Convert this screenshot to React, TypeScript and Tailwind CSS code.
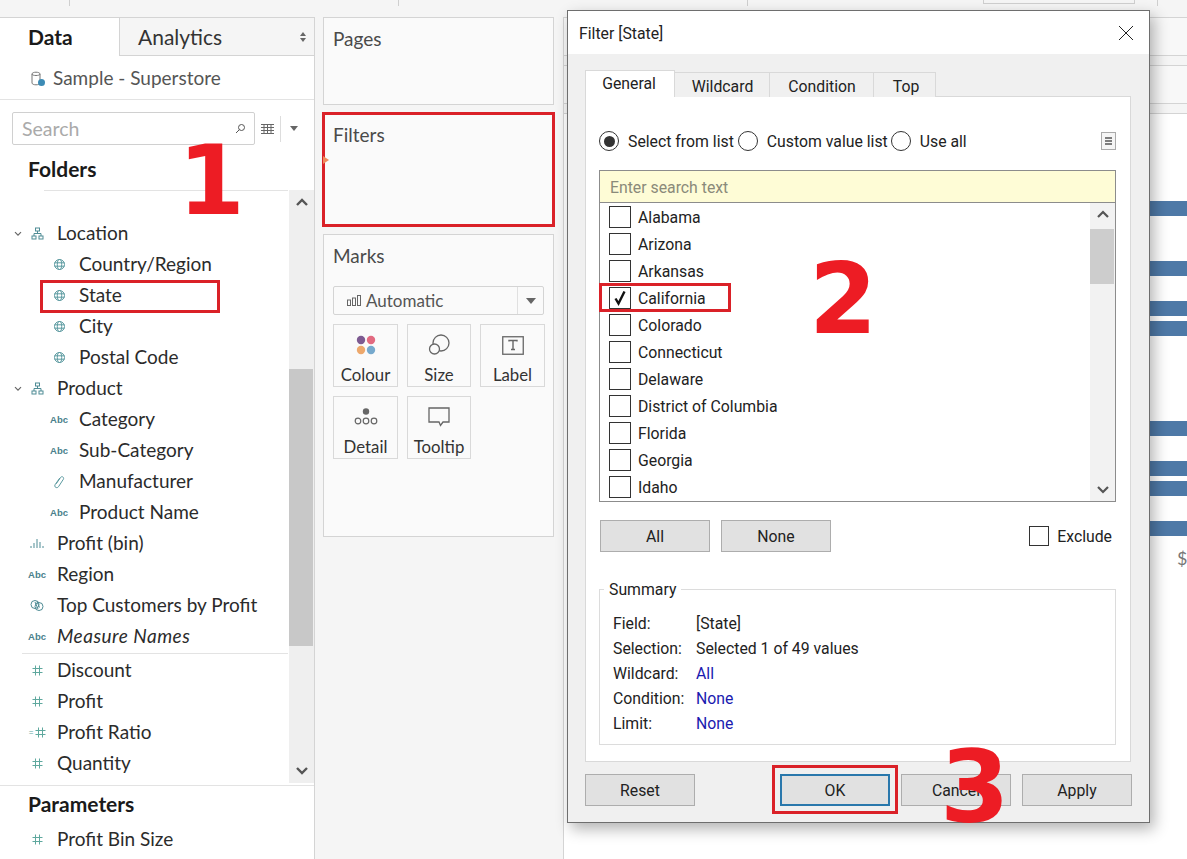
import React from "react";

const sans = "font-['Lato','Liberation_Sans',sans-serif]";
const win = "font-['Roboto','Liberation_Sans',sans-serif]";

function Globe() {
  return (
    <svg width="13" height="13" viewBox="0 0 13 13" fill="none" stroke="#5b9aa0" strokeWidth="1">
      <circle cx="6.5" cy="6.5" r="5" />
      <ellipse cx="6.5" cy="6.5" rx="2.2" ry="5" />
      <path d="M1.5 4.8h10M1.5 8.2h10" />
    </svg>
  );
}

function Hier() {
  return (
    <svg width="13" height="13" viewBox="0 0 13 13" fill="none" stroke="#4f8c95" strokeWidth="1">
      <rect x="4.5" y="1" width="4" height="3" />
      <rect x="1" y="9" width="4" height="3" />
      <rect x="8" y="9" width="4" height="3" />
      <path d="M6.5 4v2.5M3 9V6.5h7V9" />
    </svg>
  );
}

function Chevron() {
  return (
    <svg width="8" height="6" viewBox="0 0 8 6" fill="none" stroke="#666" strokeWidth="1.2">
      <path d="M1 1.2l3 3 3-3" />
    </svg>
  );
}

function Abc() {
  return <span className="text-[9.5px] leading-none font-bold text-[#4a7f8c] font-['Liberation_Sans',sans-serif]">Abc</span>;
}

function Hash() {
  return (
    <svg width="11" height="11" viewBox="0 0 11 11" fill="none" stroke="#5fa89e" strokeWidth="1">
      <path d="M3.5 .5v10M7.5 .5v10M.5 3.5h10M.5 7.5h10" />
    </svg>
  );
}

function Clip() {
  return (
    <svg width="12" height="14" viewBox="0 0 12 14" fill="none" stroke="#5b9aa0" strokeWidth="1">
      <path d="M3.2 8.8L7.6 2.4c1.2-1.6 3.8-.2 2.8 1.8L5.6 11.6c-1.5 2.2-4.8.6-3.6-1.8L6.8 3" />
    </svg>
  );
}

function Bins() {
  return (
    <svg width="14" height="9" viewBox="0 0 14 9" stroke="#4f8c95" strokeWidth="1">
      <path d="M1 9V7M4 9V4M7 9V0M10 9V3M13 9V7" />
    </svg>
  );
}

function Sets() {
  return (
    <svg width="14" height="13" viewBox="0 0 14 13" fill="none" stroke="#4f8c95" strokeWidth="1">
      <circle cx="5" cy="5.5" r="4" />
      <circle cx="9" cy="7.5" r="4" />
      <path d="M5 3l3 7M7 2.5l2.5 6" />
    </svg>
  );
}

function Row({ icon, label, depth, arrow, italic }: { icon: React.ReactNode; label: string; depth: number; arrow?: boolean; italic?: boolean }) {
  return (
    <div className={`flex items-center h-[31px] ${depth ? "pl-[50px]" : "pl-[14px]"}`}>
      {!depth && <span className="w-[8px] flex items-center justify-center">{arrow && <Chevron />}</span>}
      <span className={`flex justify-center items-center ${depth ? "w-[18px] mr-[11px]" : "w-[20px] ml-[5px] mr-[10px]"}`}>{icon}</span>
      <span className={`text-[19px] text-[#2b2b2b] whitespace-nowrap ${italic ? "italic tracking-[0.5px]" : ""}`}>{label}</span>
    </div>
  );
}

function Shelf({ children, h }: { children: React.ReactNode; h: string }) {
  return <div className={`border border-[#d4d4d4] bg-[#fafafa] ${h} px-[9px] pt-[9px] text-[19px] text-[#4a4a4a] leading-[24px]`}>{children}</div>;
}

function MarkCard({ label, icon }: { label: string; icon: React.ReactNode }) {
  return (
    <div className="h-[63px] border border-[#d9d9d9] flex flex-col items-center pt-[9px]">
      <div className="h-[22px] flex items-center justify-center">{icon}</div>
      <div className="mt-[9px] text-[16.8px] leading-[20px] text-[#333]">{label}</div>
    </div>
  );
}

function Check({ on }: { on?: boolean }) {
  return (
    <div className="w-[22px] h-[22px] border border-[#333] bg-white flex items-center justify-center shrink-0">
      {on && (
        <svg width="14" height="16" viewBox="0 0 14 16" fill="none" stroke="#111" strokeWidth="2.4">
          <path d="M2.5 8.5l3 5L11.5 1.5" />
        </svg>
      )}
    </div>
  );
}

function Radio({ on }: { on?: boolean }) {
  return (
    <div className="w-[20px] h-[20px] rounded-full border border-[#333] flex items-center justify-center shrink-0 bg-white">
      {on && <div className="w-[11px] h-[11px] rounded-full bg-[#333]" />}
    </div>
  );
}

function Btn({ label, w = "w-[110px]" }: { label: string; w?: string }) {
  return <div className={`${w} h-[32px] pt-[2px] bg-[#e1e1e1] border border-[#adadad] flex items-center justify-center text-[#222]`}>{label}</div>;
}

function Big({ n, cls }: { n: string; cls: string }) {
  return <div className={`absolute font-['DejaVu_Sans',sans-serif] font-bold text-[#ed1c24] leading-none ${cls}`}>{n}</div>;
}

const states = ["Alabama", "Arizona", "Arkansas", "California", "Colorado", "Connecticut", "Delaware", "District of Columbia", "Florida", "Georgia", "Idaho"];
const summary: [string, string, boolean][] = [
  ["Field:", "[State]", false],
  ["Selection:", "Selected 1 of 49 values", false],
  ["Wildcard:", "All", true],
  ["Condition:", "None", true],
  ["Limit:", "None", true],
];

export default function App() {
  return (
    <div className={`relative w-[1187px] h-[859px] overflow-hidden bg-[#f5f5f5] ${sans}`}>
      <div className="h-[17px] flex items-start">
        <div className="w-[70px] h-[6px] border-r border-[#cfcfcf]" />
        <div className="w-[329px] h-[6px] border-r border-[#cfcfcf]" />
        <div className="w-[349px] h-[6px] border-r border-[#cfcfcf]" />
        <div className="ml-[235px] w-[152px] h-[4px] border-x border-b border-[#cfcfcf]" />
        <div className="w-[23px] h-[6px] border-r border-[#cfcfcf]" />
      </div>
      <div className="flex h-[842px]">
        {/* data pane */}
        <div className="w-[315px] shrink-0 bg-white border-r border-t border-[#d4d4d4] flex flex-col">
          <div className="flex h-[38px]">
            <div className="w-[119px] pl-[28px] text-[21px] font-bold text-[#1a1a1a] leading-[38px]">Data</div>
            <div className="flex-1 bg-[#f5f5f5] border-l border-b border-[#d4d4d4] flex items-center justify-between pr-[8px] text-[21px] text-[#333]">
              <span className="pl-[18px]">Analytics</span>
              <svg width="6" height="10" viewBox="0 0 6 10" fill="#666"><path d="M3 0l3 4H0zM3 10L0 6h6z" /></svg>
            </div>
          </div>
          <div className="h-[44px] pt-[2px] border-b border-[#e3e3e3] flex items-center pl-[31px] text-[19px] text-[#555]">
            <svg width="15" height="16" viewBox="0 0 15 16" fill="none" className="mr-[7px]">
              <path d="M1 3c0-2.4 8-2.4 8 0v9c0 2.4-8 2.4-8 0zM1 3c0 2 8 2 8 0" stroke="#777" />
              <circle cx="10.5" cy="11.5" r="3.5" fill="#3d8bb5" />
            </svg>
            Sample - Superstore
          </div>
          <div className="flex items-center h-[33px] mt-[12px] pl-[12px]">
            <div className="w-[243px] h-[33px] border border-[#d0d0d0] rounded-[2px] flex items-center justify-between pl-[9px] pr-[8px] text-[19.5px] text-[#aaa]">
              Search
              <svg width="11" height="11" viewBox="0 0 11 11" fill="none" stroke="#555" strokeWidth="1"><circle cx="6.5" cy="4.5" r="3" /><path d="M4.5 6.5L1 10" /></svg>
            </div>
            <svg width="13" height="10" viewBox="0 0 13 10" stroke="#666" strokeWidth="1" className="ml-[6px]"><path d="M0 .5h13M0 3.5h13M0 6.5h13M0 9.5h13M3 0v10M6.5 0v10M10 0v10" /></svg>
            <div className="w-px h-[26px] bg-[#ddd] ml-[6px]" />
            <svg width="8" height="5" viewBox="0 0 8 5" fill="#666" className="ml-[9px]"><path d="M0 0h8L4 5z" /></svg>
          </div>
          <div className="h-[45px] pl-[28px] pt-[3px] flex items-center text-[21px] font-bold text-[#1a1a1a]">Folders</div>
          <div className="flex-1 flex relative">
            <div className="absolute left-[44px] w-[244px] top-0 h-px bg-[#e3e3e3]" />
            <div className="flex-1 pt-[28px]">
              <Row depth={0} arrow icon={<Hier />} label="Location" />
              <Row depth={1} icon={<Globe />} label="Country/Region" />
              <Row depth={1} icon={<Globe />} label="State" />
              <Row depth={1} icon={<Globe />} label="City" />
              <Row depth={1} icon={<Globe />} label="Postal Code" />
              <Row depth={0} arrow icon={<Hier />} label="Product" />
              <Row depth={1} icon={<Abc />} label="Category" />
              <Row depth={1} icon={<Abc />} label="Sub-Category" />
              <Row depth={1} icon={<Clip />} label="Manufacturer" />
              <Row depth={1} icon={<Abc />} label="Product Name" />
              <Row depth={0} icon={<Bins />} label="Profit (bin)" />
              <Row depth={0} icon={<Abc />} label="Region" />
              <Row depth={0} icon={<Sets />} label="Top Customers by Profit" />
              <Row depth={0} italic icon={<Abc />} label="Measure Names" />
              <div className="ml-[22px] mr-[26px] h-px bg-[#e3e3e3] mt-[1px] mb-[1px]" />
              <Row depth={0} icon={<Hash />} label="Discount" />
              <Row depth={0} icon={<Hash />} label="Profit" />
              <Row depth={0} icon={<><span className="text-[9px] leading-none text-[#5fa89e] mr-[1px]">=</span><Hash /></>} label="Profit Ratio" />
              <Row depth={0} icon={<Hash />} label="Quantity" />
            </div>
            <div className="absolute right-0 top-0 w-[25px] h-[593px] bg-[#efefef] flex flex-col items-center justify-between py-[8px]">
              <svg width="12" height="8" viewBox="0 0 12 8" fill="none" stroke="#555" strokeWidth="2.4"><path d="M1 7l5-5 5 5" /></svg>
              <svg width="12" height="8" viewBox="0 0 12 8" fill="none" stroke="#555" strokeWidth="2.4"><path d="M1 1l5 5 5-5" /></svg>
            </div>
            <div className="absolute right-px top-[179px] w-[24px] h-[277px] bg-[#c8c8c8]" />
          </div>
          <div className="border-t border-[#e3e3e3] h-[74px] shrink-0">
            <div className="h-[36px] mb-[2px] pl-[28px] flex items-center text-[21px] font-bold text-[#1a1a1a]">Parameters</div>
            <Row depth={0} icon={<Hash />} label="Profit Bin Size" />
          </div>
        </div>

        {/* shelves */}
        <div className="w-[249px] shrink-0 pl-[8px] pr-[9px] flex flex-col gap-[8px] border-r border-[#d4d4d4]">
          <Shelf h="h-[88px]">Pages</Shelf>
          <Shelf h="h-[113px]">Filters</Shelf>
          <Shelf h="h-[303px]">
            <div>Marks</div>
            <div className="mt-[18px] h-[29px] border border-[#d4d4d4] rounded-[2px] flex items-center text-[17px] text-[#555] pl-[13px]">
              <svg width="14" height="11" viewBox="0 0 14 11" fill="none" stroke="#666" strokeWidth="1" className="mr-[5px]"><rect x=".5" y="5" width="3" height="5.5" /><rect x="5.5" y="3" width="3" height="7.5" /><rect x="10.5" y=".5" width="3" height="10" /></svg>
              Automatic
              <div className="ml-auto w-[26px] h-full border-l border-[#e0e0e0] flex items-center justify-center">
                <svg width="10" height="6" viewBox="0 0 10 6" fill="#666"><path d="M0 0h10L5 6z" /></svg>
              </div>
            </div>
            <div className="mt-[9px] grid grid-cols-[65px_64px_65px] gap-x-[9px] gap-y-[9px]">
              <MarkCard label="Colour" icon={
                <svg width="20" height="20" viewBox="0 0 20 20"><circle cx="5" cy="5" r="4.2" fill="#7d5a91" /><circle cx="15" cy="5" r="4.2" fill="#e26a80" /><circle cx="5" cy="15" r="4.2" fill="#eda86c" /><circle cx="15" cy="15" r="4.2" fill="#76a9cd" /></svg>
              } />
              <MarkCard label="Size" icon={
                <svg width="22" height="22" viewBox="0 0 22 22" fill="none" stroke="#666" strokeWidth="1.3"><circle cx="13" cy="9" r="8" /><circle cx="6.5" cy="15" r="5" fill="#fafafa" /></svg>
              } />
              <MarkCard label="Label" icon={
                <svg width="22" height="19" viewBox="0 0 22 19" fill="none"><rect x=".75" y=".75" width="20.5" height="17.5" stroke="#666" strokeWidth="1.3" /><path d="M7 5.5V4.5h8v1M11 4.5v9M9 13.5h4" stroke="#666" strokeWidth="1.4" /></svg>
              } />
              <MarkCard label="Detail" icon={
                <svg width="24" height="20" viewBox="0 0 24 20" fill="none"><circle cx="12" cy="4.5" r="3.2" fill="#666" /><circle cx="4" cy="14" r="2.8" stroke="#666" strokeWidth="1.2" /><circle cx="12" cy="14" r="2.8" stroke="#666" strokeWidth="1.2" /><circle cx="20" cy="14" r="2.8" stroke="#666" strokeWidth="1.2" /></svg>
              } />
              <MarkCard label="Tooltip" icon={
                <svg width="22" height="20" viewBox="0 0 22 20" fill="none" stroke="#666" strokeWidth="1.3"><path d="M1 1h20v14h-6l-2.5 3.5L11 15H1z" /></svg>
              } />
            </div>
          </Shelf>
        </div>

        {/* canvas behind the dialog */}
        <div className="flex-1 flex flex-col">
          <div className="h-[39px] border-y border-[#d4d4d4] bg-[#f8f8f8]" />
          <div className="h-[9px]" />
          <div className="h-[39px] border-y border-[#d4d4d4] bg-[#f8f8f8]" />
          <div className="h-[9px]" />
          <div className="flex-1 relative bg-white border-t border-[#d4d4d4]">
            <div className="absolute right-0 top-[87px] w-[38px] h-[15px] bg-[#4e79a7]" />
            <div className="absolute right-0 top-[147px] w-[38px] h-[15px] bg-[#4e79a7]" />
            <div className="absolute right-0 top-[187px] w-[38px] h-[15px] bg-[#4e79a7]" />
            <div className="absolute right-0 top-[207px] w-[38px] h-[15px] bg-[#4e79a7]" />
            <div className="absolute right-0 top-[307px] w-[38px] h-[15px] bg-[#4e79a7]" />
            <div className="absolute right-0 top-[347px] w-[38px] h-[15px] bg-[#4e79a7]" />
            <div className="absolute right-0 top-[367px] w-[38px] h-[15px] bg-[#4e79a7]" />
            <div className="absolute right-0 top-[407px] w-[38px] h-[15px] bg-[#4e79a7]" />
            <div className="absolute right-0 top-[431px] text-[18px] text-[#777] w-[10px] overflow-hidden">$</div>
          </div>
        </div>
      </div>

      {/* filter dialog */}
      <div className={`absolute left-[567px] top-[10px] w-[583px] h-[813px] bg-[#f0f0f0] border border-[#6e6e6e] shadow-[4px_6px_14px_rgba(0,0,0,0.3)] ${win} text-[15.8px] text-[#222]`}>
        <div className="h-[43px] bg-white flex items-center justify-between pl-[11px] pr-[15px]">
          <span className="pt-[2px]">Filter [State]</span>
          <svg width="16" height="16" viewBox="0 0 16 16" stroke="#222" strokeWidth="1"><path d="M1 1l14 14M15 1L1 15" /></svg>
        </div>
        <div className="ml-[17px] mt-[16px]">
          <div className="flex items-end h-[27px] relative z-10">
            <div className="w-[90px] h-[27px] pr-[2px] bg-white border border-[#d9d9d9] border-b-0 flex items-center justify-center">General</div>
            <div className="w-[95px] h-[25px] pt-[3px] pl-[1px] bg-[#f0f0f0] border-r border-t border-[#d9d9d9] flex items-center justify-center">Wildcard</div>
            <div className="w-[104px] h-[25px] pt-[3px] pl-[1px] bg-[#f0f0f0] border-r border-t border-[#d9d9d9] flex items-center justify-center">Condition</div>
            <div className="w-[62px] h-[25px] pt-[3px] pl-[3px] bg-[#f0f0f0] border-r border-t border-[#d9d9d9] flex items-center justify-center">Top</div>
          </div>
          <div className="w-[546px] h-[666px] bg-white border border-[#d9d9d9] -mt-px pl-[13px] pt-[33px]">
            <div className="flex items-center h-[22px] w-[517px]">
              <Radio on /><span className="ml-[9px] mr-[4px] pt-[2px]">Select from list</span>
              <Radio /><span className="ml-[9px] mr-[3px] pt-[2px]">Custom value list</span>
              <Radio /><span className="ml-[9px] pt-[2px]">Use all</span>
              <svg width="15" height="18" viewBox="0 0 15 18" fill="none" className="ml-auto"><rect x=".5" y=".5" width="14" height="17" fill="#f5f5f5" stroke="#aaa" /><path d="M4 6h7M4 9h7M4 12h7" stroke="#555" strokeWidth="1.4" /></svg>
            </div>
            <div className="mt-[18px] border border-[#8c8c8c] w-[517px]">
              <div className="h-[32px] pt-[2px] bg-[#fefcd6] border-b border-[#8c8c8c] pl-[10px] flex items-center text-[#8a8a7a]">Enter search text</div>
              <div className="flex h-[298px] overflow-hidden">
                <div className="flex-1 pl-[9px]">
                  {states.map((s) => (
                    <div key={s} className="flex items-center h-[27px]">
                      <Check on={s === "California"} />
                      <span className="ml-[7px] pt-[2px]">{s}</span>
                    </div>
                  ))}
                </div>
                <div className="w-[25px] bg-[#f2f2f2] flex flex-col items-center justify-between py-[7px] relative">
                  <svg width="12" height="8" viewBox="0 0 12 8" fill="none" stroke="#555" strokeWidth="2.2"><path d="M1 7l5-5 5 5" /></svg>
                  <svg width="12" height="8" viewBox="0 0 12 8" fill="none" stroke="#555" strokeWidth="2.2"><path d="M1 1l5 5 5-5" /></svg>
                  <div className="absolute left-0 right-px top-[26px] h-[55px] bg-[#cdcdcd]" />
                </div>
              </div>
            </div>
            <div className="mt-[18px] flex items-center w-[517px]">
              <div className="w-[1px]" />
              <Btn label="All" />
              <div className="w-[11px]" />
              <Btn label="None" />
              <div className="ml-auto flex items-center pr-[4px]">
                <div className="w-[20px] h-[20px] border border-[#333]" />
                <span className="ml-[8px] pt-[2px]">Exclude</span>
              </div>
            </div>
            <div className="relative mt-[37px] w-[517px] h-[156px] border border-[#dcdcdc] pl-[13px] pt-[21px]">
              <div className="absolute left-[4px] -top-[10px] bg-white px-[5px] leading-[20px]">Summary</div>
              {summary.map(([k, v, blue]) => (
                <div key={k} className="flex h-[25px] items-center">
                  <span className="w-[83px]">{k}</span>
                  <span className={blue ? "text-[#1a1ab0]" : ""}>{v}</span>
                </div>
              ))}
            </div>
          </div>
          <div className="flex mt-[12px]">
            <Btn label="Reset" />
            <div className="ml-[85px] w-[110px] h-[32px] pt-[2px] bg-[#e1e1e1] border-2 border-[#2a78ac] flex items-center justify-center">OK</div>
            <div className="w-[11px]" />
            <Btn label="Cancel" />
            <div className="w-[11px]" />
            <Btn label="Apply" />
          </div>
        </div>
      </div>

      {/* tutorial annotations */}
      <div className="absolute left-[322px] top-[112px] w-[233px] h-[115px] border-[3px] border-[#da2128]" />
      <div className="absolute left-[323px] top-[156px] w-0 h-0 border-y-[4px] border-y-transparent border-l-[6px] border-l-[#f08a5d]" />
      <div className="absolute left-[40px] top-[280px] w-[180px] h-[33px] border-[3px] border-[#da2128]" />
      <div className="absolute left-[599px] top-[283px] w-[132px] h-[29px] border-[3px] border-[#da2128]" />
      <div className="absolute left-[772px] top-[765px] w-[126px] h-[49px] border-[3px] border-[#da2128]" />
      <Big n="1" cls="left-[178px] top-[133px] text-[96px]" />
      <Big n="2" cls="left-[809px] top-[250px] text-[98px]" />
      <Big n="3" cls="left-[940px] top-[738px] text-[100px]" />
    </div>
  );
}
